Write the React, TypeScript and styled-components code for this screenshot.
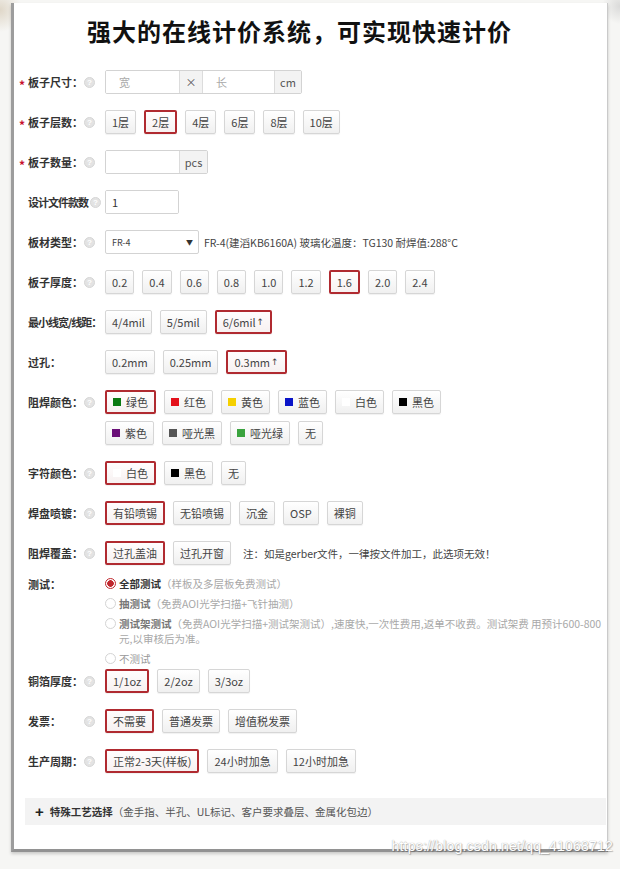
import React from 'react';
import styled, { createGlobalStyle, css } from 'styled-components';

const Global = createGlobalStyle`
  html, body { margin: 0; padding: 0; }
  body {
    width: 620px; height: 869px; overflow: hidden;
    background: #f6f6f4;
    font-family: "Noto Sans CJK SC", "Noto Sans", sans-serif;
    color: #333;
  }
  * { box-sizing: border-box; }
`;

const Page = styled.div`
  position: relative;
  width: 620px;
  height: 869px;
  padding: 3px 12px 0 11px;
  background:
    radial-gradient(circle at 0 10px, rgba(205, 190, 165, 0.55), rgba(246, 246, 244, 0) 22px),
    radial-gradient(circle at 620px 6px, rgba(190, 190, 190, 0.5), rgba(246, 246, 244, 0) 18px),
    #f6f6f4;
`;

const Card = styled.div`
  height: 849px;
  background: #fff;
  border-left: 3px solid #9d9d9d;
  border-right: 1px solid #cacaca;
  border-bottom: 3px solid #929292;
  box-shadow: 0 2px 3px rgba(0, 0, 0, 0.18);
  display: flex;
  flex-direction: column;
`;

const Title = styled.h1`
  margin: 11px 0 0;
  padding-right: 22px;
  height: 34px;
  font-size: 24px;
  line-height: 34px;
  font-weight: 700;
  color: #111;
  text-align: center;
  letter-spacing: 1px;
`;

const Form = styled.div`
  padding: 6px 0 0 5px;
  display: flex;
  flex-direction: column;
`;

const Row = styled.div<{ $mt?: number }>`
  display: flex;
  align-items: flex-start;
  margin-top: ${(p) => (p.$mt ?? 16)}px;
`;

const LabelCell = styled.div`
  flex: 0 0 86px;
  height: 24px;
  display: flex;
  align-items: center;
`;

const Star = styled.span`
  flex: 0 0 9px;
  color: #c8102e;
  font-size: 12px;
  font-weight: 700;
  padding-top: 4px;
`;

const LabelText = styled.span<{ $tight?: boolean }>`
  min-width: 56px;
  font-size: 11px;
  font-weight: 700;
  color: #333;
  white-space: nowrap;
  letter-spacing: ${(p) => (p.$tight ? '-1px' : '0')};
`;

const Help = styled.span<{ $ml?: number }>`
  flex: none;
  width: 11px;
  height: 11px;
  margin-left: ${(p) => p.$ml ?? 0}px;
  border-radius: 50%;
  background: #e3e3e3;
  border: 1px solid #d6d6d6;
  color: #fff;
  font: 700 8px/9px "Liberation Sans", sans-serif;
  text-align: center;
`;

const Controls = styled.div<{ $gap?: number }>`
  display: flex;
  flex-direction: column;
  gap: ${(p) => p.$gap ?? 7}px;
`;

const Line = styled.div`
  display: flex;
  align-items: center;
  gap: 8px;
  height: 24px;
`;

const Btn = styled.button<{ $on?: boolean }>`
  height: 24px;
  padding: 0 6px;
  display: inline-flex;
  align-items: center;
  gap: 5px;
  font: 11px "Noto Sans CJK SC", sans-serif;
  color: #444;
  white-space: nowrap;
  background: linear-gradient(#ffffff, #f0f0f0);
  border: 1px solid #d6d6d6;
  border-radius: 2px;
  box-shadow: 0 1px 1px rgba(0, 0, 0, 0.06);
  cursor: pointer;
  ${(p) =>
    p.$on &&
    css`
      border: 2px solid #b02a30;
      background: linear-gradient(#fffdfd, #f7f1f1);
    `}
`;

const Arrow = styled.span`
  font: 9px "DejaVu Sans", sans-serif;
  margin-left: -4px;
`;

const Swatch = styled.span<{ $c: string }>`
  width: 8px;
  height: 8px;
  background: ${(p) => p.$c};
`;

const InputGroup = styled.div`
  display: flex;
  height: 24px;
  border: 1px solid #d3d3d3;
  border-radius: 2px;
  overflow: hidden;
`;

const Field = styled.input<{ $w: number }>`
  width: ${(p) => p.$w}px;
  height: 100%;
  border: none;
  outline: none;
  padding: 0 0 0 ${(p) => (p.value ? 6 : 13)}px;
  font: 11px "Noto Sans CJK SC", sans-serif;
  color: #333;
  background: #fff;
  &::placeholder { color: #aaa; }
`;

const Addon = styled.span<{ $w: number }>`
  width: ${(p) => p.$w}px;
  display: flex;
  align-items: center;
  justify-content: center;
  background: #f3f3f3;
  border-left: 1px solid #dcdcdc;
  border-right: 1px solid #dcdcdc;
  font-size: 11px;
  color: #555;
  &:last-child { border-right: none; }
`;

const Select = styled.div`
  width: 94px;
  height: 24px;
  border: 1px solid #d3d3d3;
  border-radius: 2px;
  display: flex;
  align-items: center;
  justify-content: space-between;
  padding: 0 5px 0 6px;
  font-size: 9px;
  color: #444;
`;

const Caret = styled.span`
  font-size: 7px;
  color: #333;
`;

const Note = styled.span<{ $ml?: number }>`
  font-size: 10.5px;
  color: #444;
  white-space: nowrap;
  margin-left: ${(p) => p.$ml ?? 4}px;
`;

const RadioList = styled.div`
  display: flex;
  flex-direction: column;
  gap: 5px;
`;

const RadioItem = styled.div`
  display: flex;
  align-items: flex-start;
  gap: 3px;
  font-size: 10.5px;
  line-height: 15px;
  white-space: nowrap;
`;

const RadioDot = styled.span<{ $on?: boolean }>`
  flex: none;
  width: 11px;
  height: 11px;
  margin-top: 2px;
  border-radius: 50%;
  border: 1px solid ${(p) => (p.$on ? '#c0282e' : '#d4d4d4')};
  background: ${(p) =>
    p.$on ? 'radial-gradient(circle, #c0282e 0 3px, #fff 3.6px)' : '#fff'};
`;

const Strong = styled.span<{ $dim?: boolean }>`
  font-weight: 700;
  color: ${(p) => (p.$dim ? '#777' : '#333')};
`;

const Muted = styled.span<{ $c?: string }>`
  color: ${(p) => p.$c ?? '#a8a8a8'};
`;

const Special = styled.div`
  margin: 25px 1px 0 11px;
  height: 27px;
  background: #f3f3f3;
  display: flex;
  align-items: center;
  padding-left: 10px;
  font-size: 10.5px;
  color: #555;
  white-space: nowrap;
`;

const Plus = styled.span`
  font: 700 15px/1 "Liberation Sans", sans-serif;
  color: #222;
  margin-right: 6px;
`;

const Watermark = styled.div`
  position: absolute;
  right: 7px;
  top: 838px;
  font: 14px "Liberation Sans", sans-serif;
  color: #fff;
  text-shadow: 0 0 1px #9a9a9a, 1px 1px 1px rgba(0, 0, 0, 0.25);
  letter-spacing: 0.2px;
`;

type Opt = { t: string; on?: boolean; c?: string; up?: boolean };

const Buttons = ({ items }: { items: Opt[] }) => (
  <Line>
    {items.map((o) => (
      <Btn key={o.t} $on={o.on}>
        {o.c && <Swatch $c={o.c} />}
        {o.t}
        {o.up && <Arrow>↑</Arrow>}
      </Btn>
    ))}
  </Line>
);

const Label = ({
  text,
  req,
  help = true,
  tight,
  helpMl,
}: {
  text: string;
  req?: boolean;
  help?: boolean;
  tight?: boolean;
  helpMl?: number;
}) => (
  <LabelCell>
    <Star>{req ? '*' : ''}</Star>
    <LabelText $tight={tight}>{text}</LabelText>
    {help && <Help $ml={helpMl}>?</Help>}
  </LabelCell>
);

export default function App() {
  return (
    <>
      <Global />
      <Page>
        <Card>
          <Title>强大的在线计价系统，可实现快速计价</Title>
          <Form>
            <Row>
              <Label text="板子尺寸：" req />
              <InputGroup>
                <Field $w={73} placeholder="宽" />
                <Addon $w={24}>×</Addon>
                <Field $w={71} placeholder="长" />
                <Addon $w={27}>cm</Addon>
              </InputGroup>
            </Row>
            <Row>
              <Label text="板子层数：" req />
              <Buttons
                items={[
                  { t: '1层' },
                  { t: '2层', on: true },
                  { t: '4层' },
                  { t: '6层' },
                  { t: '8层' },
                  { t: '10层' },
                ]}
              />
            </Row>
            <Row>
              <Label text="板子数量：" req />
              <InputGroup>
                <Field $w={73} />
                <Addon $w={28}>pcs</Addon>
              </InputGroup>
            </Row>
            <Row>
              <Label text="设计文件款数" tight helpMl={2} />
              <InputGroup>
                <Field $w={72} value="1" readOnly />
              </InputGroup>
            </Row>
            <Row>
              <Label text="板材类型：" />
              <Line>
                <Select>
                  <span>FR-4</span>
                  <Caret>▼</Caret>
                </Select>
                <Note $ml={-3}>FR-4(建滔KB6160A) 玻璃化温度：TG130 耐焊值:288°C</Note>
              </Line>
            </Row>
            <Row>
              <Label text="板子厚度：" />
              <Buttons
                items={[
                  { t: '0.2' },
                  { t: '0.4' },
                  { t: '0.6' },
                  { t: '0.8' },
                  { t: '1.0' },
                  { t: '1.2' },
                  { t: '1.6', on: true },
                  { t: '2.0' },
                  { t: '2.4' },
                ]}
              />
            </Row>
            <Row>
              <Label text="最小线宽/线距：" help={false} tight />
              <Buttons
                items={[{ t: '4/4mil' }, { t: '5/5mil' }, { t: '6/6mil', on: true, up: true }]}
              />
            </Row>
            <Row>
              <Label text="过孔：" help={false} />
              <Buttons
                items={[{ t: '0.2mm' }, { t: '0.25mm' }, { t: '0.3mm', on: true, up: true }]}
              />
            </Row>
            <Row>
              <Label text="阻焊颜色：" />
              <Controls>
                <Buttons
                  items={[
                    { t: '绿色', on: true, c: '#0b7a12' },
                    { t: '红色', c: '#e3111b' },
                    { t: '黄色', c: '#f5d000' },
                    { t: '蓝色', c: '#0a14c8' },
                    { t: '白色', c: '#ffffff' },
                    { t: '黑色', c: '#000000' },
                  ]}
                />
                <Buttons
                  items={[
                    { t: '紫色', c: '#6a0f78' },
                    { t: '哑光黑', c: '#555555' },
                    { t: '哑光绿', c: '#3aa33e' },
                    { t: '无' },
                  ]}
                />
              </Controls>
            </Row>
            <Row>
              <Label text="字符颜色：" />
              <Buttons
                items={[
                  { t: '白色', on: true, c: '#ffffff' },
                  { t: '黑色', c: '#000000' },
                  { t: '无' },
                ]}
              />
            </Row>
            <Row>
              <Label text="焊盘喷镀：" />
              <Buttons
                items={[
                  { t: '有铅喷锡', on: true },
                  { t: '无铅喷锡' },
                  { t: '沉金' },
                  { t: 'OSP' },
                  { t: '裸铜' },
                ]}
              />
            </Row>
            <Row>
              <Label text="阻焊覆盖：" />
              <Line>
                <Btn $on>过孔盖油</Btn>
                <Btn>过孔开窗</Btn>
                <Note>注：如是gerber文件，一律按文件加工，此选项无效！</Note>
              </Line>
            </Row>
            <Row $mt={11}>
              <LabelCell style={{ height: 15 }}>
                <Star />
                <LabelText>测试：</LabelText>
              </LabelCell>
              <RadioList>
                <RadioItem>
                  <RadioDot $on />
                  <span>
                    <Strong>全部测试</Strong>
                    <Muted>（样板及多层板免费测试）</Muted>
                  </span>
                </RadioItem>
                <RadioItem>
                  <RadioDot />
                  <span>
                    <Strong $dim>抽测试</Strong>
                    <Muted>（免费AOI光学扫描+飞针抽测）</Muted>
                  </span>
                </RadioItem>
                <RadioItem>
                  <RadioDot />
                  <span>
                    <Strong $dim>测试架测试</Strong>
                    <Muted>
                      （免费AOI光学扫描+测试架测试）,速度快,一次性费用,返单不收费。测试架费 用预计600-800
                    </Muted>
                    <br />
                    <Muted>元,以审核后为准。</Muted>
                  </span>
                </RadioItem>
                <RadioItem>
                  <RadioDot />
                  <Muted $c="#999">不测试</Muted>
                </RadioItem>
              </RadioList>
            </Row>
            <Row $mt={3}>
              <Label text="铜箔厚度：" />
              <Buttons items={[{ t: '1/1oz', on: true }, { t: '2/2oz' }, { t: '3/3oz' }]} />
            </Row>
            <Row>
              <Label text="发票：" />
              <Buttons items={[{ t: '不需要', on: true }, { t: '普通发票' }, { t: '增值税发票' }]} />
            </Row>
            <Row>
              <Label text="生产周期：" />
              <Buttons
                items={[{ t: '正常2-3天(样板)', on: true }, { t: '24小时加急' }, { t: '12小时加急' }]}
              />
            </Row>
          </Form>
          <Special>
            <Plus>+</Plus>
            <Strong>特殊工艺选择</Strong>
            <span>（金手指、半孔、UL标记、客户要求叠层、金属化包边）</span>
          </Special>
        </Card>
        <Watermark>https://blog.csdn.net/qq_41068712</Watermark>
      </Page>
    </>
  );
}
